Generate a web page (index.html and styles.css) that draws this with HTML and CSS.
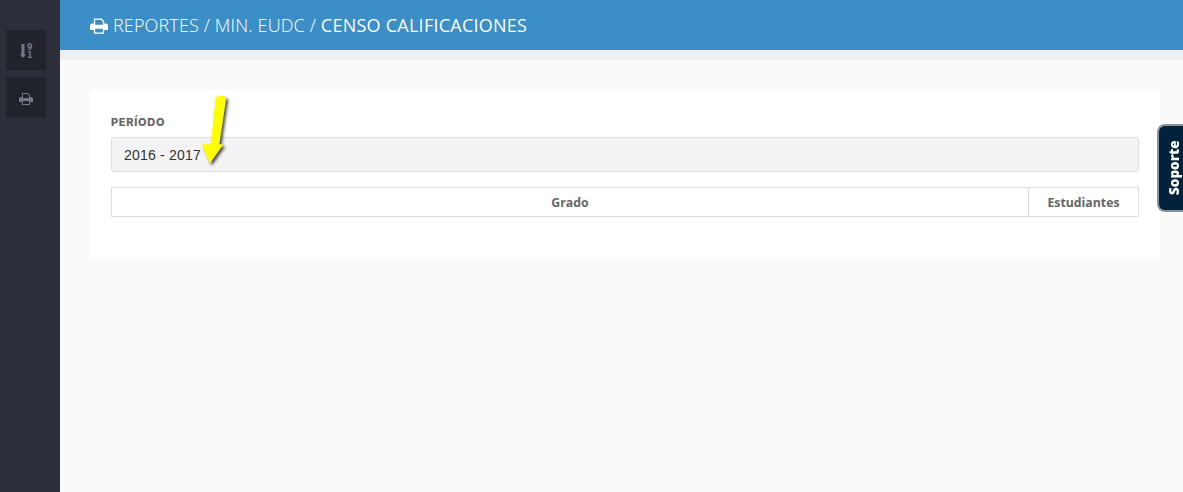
FILE: index.html
```html
<!DOCTYPE html>
<html lang="en">
<head>
  <meta charset="UTF-8" />
  <title>Censo Calificaciones</title>
  <link rel="stylesheet" href="styles.css">
</head>
<body>

<aside class="sidebar">
  <a class="side-btn">
    <svg width="16" height="24" viewBox="0 -4 16 24">
      <path d="M3.500 2h3v10.500H8L5 16 2 12.500h1.500z" fill="#737888"/>
      <text x="9" y="8" class="side-num">9</text>
      <text x="9" y="16" class="side-num">1</text>
    </svg>
  </a>
  <a class="side-btn">
    <svg class="side-print" width="14" height="13" viewBox="0 0 14 13">
      <path d="M3 5V1h6l2 2v2h1.200Q14 5 14 6.800V10h-3v3H3v-3H0V6.800Q0 5 1.800 5zM4 2v4h6V3.500L8.500 2zM4 9v3h6V9z" fill="#737888" fill-rule="evenodd"/>
    </svg>
  </a>
</aside>

<div class="page">
  <header class="topbar">
    <svg class="top-icon" width="18" height="17" viewBox="0 0 14 13">
      <path d="M3 5V1h6l2 2v2h1.200Q14 5 14 6.800V10h-3v3H3v-3H0V6.800Q0 5 1.800 5zM4 2v4h6V3.500L8.500 2zM4 9v3h6V9z" fill="#fff" fill-rule="evenodd"/>
    </svg>
    <span>REPORTES / MIN. EUDC / <b>CENSO CALIFICACIONES</b></span>
  </header>
  <div class="strip"></div>

  <main class="content">
    <section class="card">
      <label class="field-label">PERÍODO</label>
      <div class="field">2016 - 2017</div>
      <table class="grid">
        <tr>
          <th>Grado</th>
          <th class="col-count">Estudiantes</th>
        </tr>
      </table>
    </section>
  </main>
</div>

<!-- yellow arrow drawn on top of the page -->
<svg class="arrow" width="40" height="80" viewBox="0 0 40 80">
  <path d="M20.500 6Q25 3 29.500 6L22.500 53H26L14 70L7 53H15.500z"/>
</svg>

<a class="support">Soporte</a>

</body>
</html>
```

FILE: styles.css
```css
html, body {
  height: 100%;
}

body {
  margin: 0;
  display: flex;
  overflow: hidden;
  font-family: 'Open Sans', sans-serif;
  background: #fafafa;
  color: #666;
}

.sidebar {
  width: 60px;
  flex: none;
  background: #2c2f3a;
  padding: 30px 6px 0;
  box-sizing: border-box;
  display: flex;
  flex-direction: column;
  gap: 7px;
}

.side-btn {
  width: 40px;
  height: 40px;
  background: #20232c;
  display: flex;
  align-items: center;
  justify-content: center;
}

.side-num {
  font: bold 8px 'DejaVu Sans', sans-serif;
  fill: #737888;
}

.side-print {
  margin-top: 2px;
}

.page {
  flex: 1;
  min-width: 0;
}

.topbar {
  height: 50px;
  background: #3b8ec6;
  color: #fff;
  font-size: 18px;
  font-weight: 300;
  letter-spacing: 0.14px;
  padding-left: 30px;
  display: flex;
  align-items: center;
  gap: 5px;
}

.topbar b {
  font-weight: 500;
  letter-spacing: 0.25px;
}

.strip {
  height: 10px;
  background: #eee;
}

.content {
  padding: 30px 23px 0 30px;
}

.card {
  background: #fff;
  height: 168px;
  box-sizing: border-box;
  padding: 25px 21px 0;
}

.field-label {
  display: block;
  font-family: Inter, sans-serif;
  font-size: 11px;
  font-weight: 800;
  line-height: 14px;
  letter-spacing: 0.7px;
  margin-bottom: 8px;
  color: #666;
}

.field {
  height: 35px;
  box-sizing: border-box;
  background: #f3f3f3;
  border: 1px solid #ddd;
  border-radius: 3px;
  padding-left: 12px;
  font-family: 'Liberation Sans', sans-serif;
  font-size: 14px;
  letter-spacing: 0.2px;
  line-height: 34px;
  color: #333;
}

.grid {
  width: 100%;
  margin-top: 15px;
  border-collapse: collapse;
}

.grid th {
  height: 28px;
  padding: 0;
  border: 1px solid #ddd;
  font-size: 12.3px;
  font-weight: 700;
  color: #666;
}

.grid .col-count {
  width: 109px;
}

.arrow {
  position: absolute;
  left: 196px;
  top: 92px;
  filter: drop-shadow(2px 2px 1.5px rgba(0, 0, 0, 0.7));
}

.arrow path {
  fill: #ff0;
  stroke: #ff0;
  stroke-width: 1.5;
  stroke-linejoin: round;
}

.support {
  position: absolute;
  right: 0;
  top: 124px;
  width: 26px;
  height: 88px;
  box-sizing: border-box;
  background: #02223c;
  border: 2px solid #8a929a;
  border-left: 0;
  border-radius: 0 8px 8px 0;
  padding-right: 7px;
  color: #fff;
  font-size: 13.5px;
  font-weight: 800;
  writing-mode: vertical-rl;
  transform: rotate(180deg);
  text-align: center;
  line-height: 17px;
}
```
